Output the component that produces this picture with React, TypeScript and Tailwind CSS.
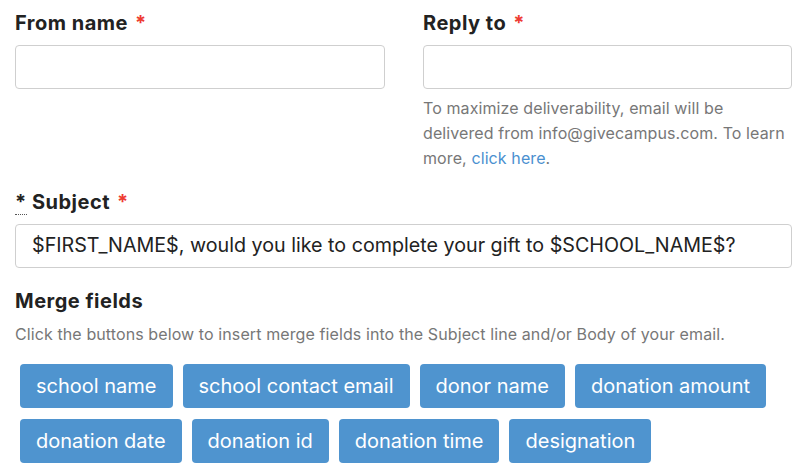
import React from "react";

const mergeFields = [
  "school name",
  "school contact email",
  "donor name",
  "donation amount",
  "donation date",
  "donation id",
  "donation time",
  "designation",
];

function Req() {
  return <span className="text-[#ee3b32] ml-[7px]">*</span>;
}

export default function App() {
  return (
    <div className="w-[800px] h-[472px] overflow-hidden bg-white pl-[15px] pr-[8px] pt-[9px] font-['Inter',sans-serif] text-[#222]">
      {/* from / reply */}
      <div className="flex gap-[38px]">
        <div className="w-[370px]">
          <label className="block text-[20px] font-bold leading-[28px] tracking-[0.5px]">
            From name<Req />
          </label>
          <input className="mt-[8px] w-full h-[44px] border border-[#cfcfcf] rounded-[4px] outline-none" />
        </div>
        <div className="flex-1">
          <label className="block text-[20px] font-bold leading-[28px] tracking-[0.5px]">
            Reply to<Req />
          </label>
          <input className="mt-[8px] w-full h-[44px] border border-[#cfcfcf] rounded-[4px] outline-none" />
          <p className="mt-[7px] text-[16px] leading-[25px] text-[#777] tracking-[0.1px]">
            To maximize deliverability, email will be delivered from info@givecampus.com. To learn more,{" "}
            <a className="text-[#4a90d0]">click here</a>.
          </p>
        </div>
      </div>

      {/* subject */}
      <div className="mt-[17px]">
        <label className="block text-[20px] font-bold leading-[28px] tracking-[0.5px]">
          <abbr className="no-underline border-b border-dotted border-[#555]" title="required">*</abbr> Subject<Req />
        </label>
        <div className="mt-[8px] w-full h-[44px] border border-[#cfcfcf] rounded-[4px] px-[16px] flex items-center text-[19.7px]">
          $FIRST_NAME$, would you like to complete your gift to $SCHOOL_NAME$?
        </div>
      </div>

      {/* merge fields */}
      <h3 className="mt-[19px] text-[20px] font-bold leading-[28px] tracking-[0.5px]">Merge fields</h3>
      <p className="mt-[8px] text-[16px] leading-[22px] text-[#777] tracking-[0.1px]">
        Click the buttons below to insert merge fields into the Subject line and/or Body of your email.
      </p>
      <div className="mt-[14px] flex flex-wrap">
        {mergeFields.map((f) => (
          <button
            key={f}
            className="mx-[5px] mt-[5px] mb-[6px] h-[44px] px-[16px] rounded-[4px] bg-[#4f94cf] text-white text-[20px]"
          >
            {f}
          </button>
        ))}
      </div>
    </div>
  );
}
